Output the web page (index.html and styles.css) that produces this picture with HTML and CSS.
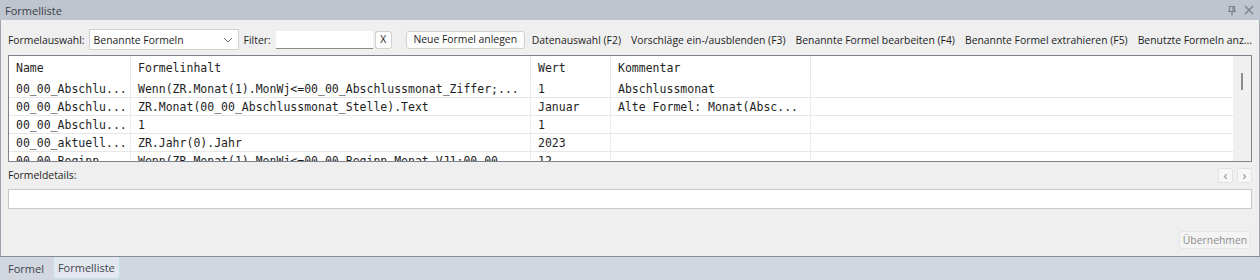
FILE: index.html
```html
<!DOCTYPE html>
<html lang="de">
<head>
  <meta charset="UTF-8" />
  <title>Formelliste</title>
  <link rel="stylesheet" href="styles.css">
</head>
<body>
  <div class="window">
    <header class="titlebar">
      <span class="title">Formelliste</span>
      <span class="title-icons">
        <svg width="10" height="11" viewBox="0 0 10 11"><path d="M2.5 1.5h5v5h-5z M1 6.5h8 M5 6.5v4" fill="none" stroke="#7b828c" stroke-width="1.2"/><path d="M6 1.5v5" stroke="#7b828c" stroke-width="1.2"/></svg>
        <svg width="10" height="10" viewBox="0 0 10 10"><path d="M1 1l8 8M9 1l-8 8" stroke="#7b828c" stroke-width="1.4"/></svg>
      </span>
    </header>

    <div class="panel">
      <!-- Toolbar -->
      <div class="toolbar">
        <span class="label">Formelauswahl:</span>
        <div class="dropdown">
          <span>Benannte Formeln</span>
          <svg width="10" height="6" viewBox="0 0 10 6"><path d="M1 1l4 4 4-4" fill="none" stroke="#6d6d6d" stroke-width="1"/></svg>
        </div>
        <span class="label">Filter:</span>
        <div class="filter"></div>
        <button class="btn btn-x">X</button>
        <button class="btn btn-new">Neue Formel anlegen</button>
        <span class="link">Datenauswahl (F2)</span>
        <span class="link">Vorschläge ein-/ausblenden (F3)</span>
        <span class="link">Benannte Formel bearbeiten (F4)</span>
        <span class="link">Benannte Formel extrahieren (F5)</span>
        <span class="link">Benutzte Formeln anz...</span>
      </div>

      <!-- Formula grid -->
      <div class="grid-wrap">
        <div class="grid">
          <div class="cell head">Name</div>
          <div class="cell head">Formelinhalt</div>
          <div class="cell head">Wert</div>
          <div class="cell head">Kommentar</div>
          <div class="cell head last"></div>

          <div class="cell">00_00_Abschlu...</div>
          <div class="cell">Wenn(ZR.Monat(1).MonWj&lt;=00_00_Abschlussmonat_Ziffer;...</div>
          <div class="cell">1</div>
          <div class="cell">Abschlussmonat</div>
          <div class="cell last"></div>

          <div class="cell">00_00_Abschlu...</div>
          <div class="cell">ZR.Monat(00_00_Abschlussmonat_Stelle).Text</div>
          <div class="cell">Januar</div>
          <div class="cell">Alte Formel: Monat(Absc...</div>
          <div class="cell last"></div>

          <div class="cell">00_00_Abschlu...</div>
          <div class="cell">1</div>
          <div class="cell">1</div>
          <div class="cell"></div>
          <div class="cell last"></div>

          <div class="cell">00_00_aktuell...</div>
          <div class="cell">ZR.Jahr(0).Jahr</div>
          <div class="cell">2023</div>
          <div class="cell"></div>
          <div class="cell last"></div>

          <div class="cell">00_00_Beginn...</div>
          <div class="cell">Wenn(ZR.Monat(1).MonWj&lt;=00_00_Beginn_Monat_VJ1;00_00...</div>
          <div class="cell">12</div>
          <div class="cell"></div>
          <div class="cell last"></div>
        </div>
        <div class="vscroll"><div class="thumb"></div></div>
      </div>

      <!-- Details -->
      <div class="details-head">
        <span class="label">Formeldetails:</span>
        <span class="nav">
          <button class="nav-btn">&lsaquo;</button>
          <button class="nav-btn">&rsaquo;</button>
        </span>
      </div>
      <div class="details-box"></div>

      <div class="footer">
        <button class="btn btn-apply">Übernehmen</button>
      </div>
    </div>

    <nav class="tabbar">
      <span class="tab">Formel</span>
      <span class="tab active">Formelliste</span>
    </nav>
  </div>
</body>
</html>
```

FILE: styles.css
```css
:root {
  --panel-bg: #efefef;
  --chrome: #bfc5ce;
  --tabbar: #d2d6de;
  --text: #1e1e1e;
  --line: #e6e6e6;
  --ui-font: 'Open Sans', sans-serif;
  --mono: 'DejaVu Sans Mono', monospace;
}

* {
  box-sizing: border-box;
}

body {
  margin: 0;
  width: 1260px;
  height: 280px;
  overflow: hidden;
  font-family: var(--ui-font);
  font-size: 10.4px;
  color: var(--text);
  background: var(--tabbar);
}

.window {
  display: flex;
  flex-direction: column;
  height: 280px;
}

.titlebar {
  height: 20px;
  background: var(--chrome);
  display: flex;
  align-items: center;
  justify-content: space-between;
  padding: 0 6px 0 5px;
  color: #3a3f47;
  font-size: 11px;
}

.title-icons {
  display: flex;
  gap: 7px;
  align-items: center;
}

.title-icons svg {
  display: block;
}

.panel {
  height: 237px;
  background: var(--panel-bg);
  border-left: 1px solid #9ea4ad;
  border-right: 1px solid #9ea4ad;
  border-bottom: 1px solid #868c95;
  padding: 9px 7px 0 7px;
  display: flex;
  flex-direction: column;
}

.toolbar {
  display: flex;
  align-items: center;
  height: 21px;
  white-space: nowrap;
  overflow: hidden;
}

.toolbar > * {
  flex-shrink: 0;
}

.label {
  white-space: nowrap;
}

.dropdown {
  width: 150px;
  height: 21px;
  margin-left: 4px;
  background: #fff;
  border: 1px solid #d2d2d2;
  display: flex;
  align-items: center;
  justify-content: space-between;
  padding: 1px 5px 0 4px;
}

.dropdown svg {
  display: block;
}

.toolbar .label + .filter {
  margin-left: 5px;
}

.dropdown + .label {
  margin-left: 5px;
}

.filter {
  width: 97px;
  height: 18px;
  background: #fff;
  border-bottom: 1px solid #8a8a8a;
}

.btn {
  font-family: var(--ui-font);
  font-size: 10.4px;
  color: var(--text);
  background: #fdfdfd;
  border: 1px solid #d0d0d0;
  border-radius: 3px;
  height: 18px;
  padding: 0;
  line-height: 15px;
}

.btn-x {
  width: 17px;
  margin-left: 2px;
}

.btn-new {
  width: 119px;
  margin-left: 14px;
}

.link {
  margin-left: 7px;
  margin-right: 3px;
}

.grid-wrap {
  margin-top: 5px;
  height: 107px;
  border: 1px solid #7e848d;
  background: #fff;
  display: flex;
  overflow: hidden;
}

.grid {
  flex: 1;
  display: grid;
  grid-template-columns: 122px 400px 80px 200px 1fr;
  grid-template-rows: 24px;
  grid-auto-rows: 18px;
  align-content: start;
  font-family: var(--mono);
  font-size: 11.5px;
}

.cell {
  border-right: 1px solid #ececec;
  border-bottom: 1px solid var(--line);
  padding-left: 7px;
  white-space: nowrap;
  overflow: hidden;
  line-height: 18px;
}

.cell.head {
  height: 24px;
  line-height: 24px;
  border-bottom: none;
  border-right-color: #e8e8e8;
}

.cell.last {
  border-right: none;
}

.vscroll {
  width: 18px;
  background: #f0f0f0;
  padding: 17px 0 0 8px;
}

.thumb {
  width: 2px;
  height: 17px;
  background: #8c8c8c;
}

.details-head {
  margin-top: 5px;
  height: 16px;
  display: flex;
  align-items: center;
  justify-content: space-between;
}

.nav {
  display: flex;
  gap: 4px;
}

.nav-btn {
  width: 15px;
  height: 15px;
  padding: 0;
  border: 1px solid #e2e2e2;
  border-radius: 2px;
  background: #f7f7f7;
  color: #8a8a8a;
  font-size: 13px;
  line-height: 11px;
  font-family: var(--ui-font);
}

.details-box {
  margin-top: 6px;
  height: 20px;
  background: #fff;
  border: 1px solid #c8c8c8;
}

.footer {
  margin-top: 22px;
  display: flex;
  justify-content: flex-end;
  padding-right: 1px;
}

.btn-apply {
  width: 72px;
  height: 18px;
  color: #8d8d8d;
  background: #f4f4f4;
  border-color: #e4e4e4;
}

.tabbar {
  flex: 1;
  display: flex;
  align-items: stretch;
  padding: 0 0 1px 5px;
  background: var(--tabbar);
  color: #3d444e;
  font-size: 11px;
}

.tab {
  display: flex;
  align-items: center;
  padding: 0 5px 0 3px;
}

.tab.active {
  margin-left: 4px;
  background: #e3e8ee;
  border: 1px solid #c3dfe8;
  border-top: none;
  border-radius: 0 0 3px 3px;
  padding: 0 4px;
}
```
